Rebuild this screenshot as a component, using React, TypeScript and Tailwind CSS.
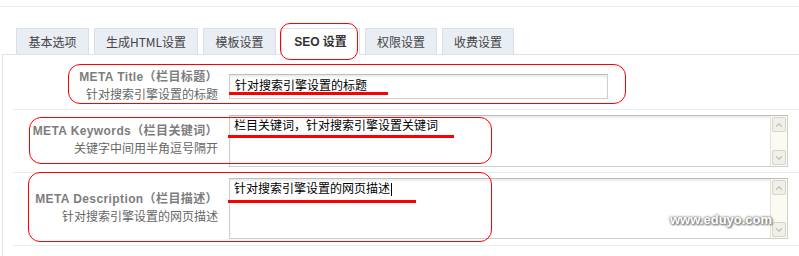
import { ChevronDown, ChevronUp } from 'lucide-react';

const tabs = ['基本选项', '生成HTML设置', '模板设置', 'SEO 设置', '权限设置', '收费设置'];
const tabWidths = ['w-[73px]', 'w-[104px]', 'w-[73px]', 'w-[79px]', 'w-[72px]', 'w-[72px]'];

const Label = ({ title, sub, top }: { title: string; sub: string; top: string }) => (
  <div className={`w-[205px] shrink-0 text-right leading-[16px] ${top}`}>
    <div className="text-[12px] font-bold tracking-[0.4px] text-[#7d7d7d] font-['Liberation_Sans','Noto_Sans_CJK_SC',sans-serif]">
      {title}
    </div>
    <div className="text-[12px] text-[#666] mt-px">{sub}</div>
  </div>
);

const ScrollBar = () => (
  <div className="w-[17px] shrink-0 flex flex-col bg-[#fbfbf2] border-l border-[#e4e3da] p-px">
    <div className="h-[15px] bg-[#f1f0e8] border border-[#d6d5cb] rounded-[2px] flex items-center justify-center">
      <ChevronUp className="w-[10px] h-[10px] text-[#c3c2b8]" strokeWidth={3} />
    </div>
    <div className="flex-1" />
    <div className="h-[15px] bg-[#f1f0e8] border border-[#d6d5cb] rounded-[2px] flex items-center justify-center">
      <ChevronDown className="w-[10px] h-[10px] text-[#c3c2b8]" strokeWidth={3} />
    </div>
  </div>
);

const TextArea = ({ text, height, caret }: { text: string; height: string; caret?: boolean }) => (
  <div className={`flex w-[559px] ${height} border border-[#cfcfcf] border-t-[#bdbdbd] shadow-[inset_0_2px_2px_rgba(0,0,0,0.08)] bg-white`}>
    <div className="flex-1 pl-[4px] pt-[2px] text-[12px] leading-[13px] text-black">
      {text}
      {caret && <span className="inline-block w-px h-[13px] bg-black align-middle ml-px" />}
    </div>
    <ScrollBar />
  </div>
);

export default function App() {
  return (
    <div className="relative w-[799px] h-[256px] bg-white overflow-hidden font-['Noto_Sans_CJK_SC',sans-serif]">
      <div className="pt-[6px]">
        <div className="h-px bg-[#e9ecf0]" />
      </div>

      {/* tabs */}
      <div className="flex items-end gap-[5px] pl-[16px] mt-[21px]">
        {tabs.map((t, i) => {
          const active = i === 3;
          return (
            <div
              key={t}
              className={`${tabWidths[i]} flex items-center justify-center border border-b-0 text-[12px] ${
                active
                  ? 'h-[27px] -mb-px relative z-10 bg-white border-[#dde3ea] text-[#333] font-bold font-["Liberation_Sans","Noto_Sans_CJK_SC",sans-serif]'
                  : 'h-[26px] bg-[#e9edf4] border-[#d9dfe8] text-[#444]'
              }`}
            >
              {t}
            </div>
          );
        })}
      </div>

      {/* content */}
      <div className="ml-[2px] border-l border-t border-[#dde3ea] h-[210px]">
        <div className="ml-[10px] h-[55px] flex items-start border-b border-[#e9ecef]">
          <Label title="META Title（栏目标题）" sub="针对搜索引擎设置的标题" top="mt-[14px]" />
          <div className="ml-[11px] mt-[19px] w-[379px] h-[25px] border border-[#cfcfcf] border-t-[#bdbdbd] shadow-[inset_0_2px_2px_rgba(0,0,0,0.08)] pl-[5px] pt-[3px] leading-[14px] text-[12px] text-black">
            针对搜索引擎设置的标题
          </div>
        </div>

        <div className="ml-[10px] h-[63px] flex items-start border-b border-[#e9ecef]">
          <Label title="META Keywords（栏目关键词）" sub="关键字中间用半角逗号隔开" top="mt-[13px]" />
          <div className="ml-[11px] mt-[5px]">
            <TextArea text="栏目关键词，针对搜索引擎设置关键词" height="h-[52px]" />
          </div>
        </div>

        <div className="ml-[10px] h-[73px] flex items-start border-b border-[#e9ecef]">
          <Label title="META Description（栏目描述）" sub="针对搜索引擎设置的网页描述" top="mt-[18px]" />
          <div className="ml-[11px] mt-[5px]">
            <TextArea text="针对搜索引擎设置的网页描述" height="h-[61px]" caret />
          </div>
        </div>
      </div>

      {/* red annotations */}
      <div className="absolute left-[280px] top-[23px] w-[78px] h-[37px] border border-[#ff0000] rounded-[10px] z-20" />
      <div className="absolute left-[68px] top-[64px] w-[558px] h-[40px] border border-[#ff0000] rounded-[12px]" />
      <div className="absolute left-[29px] top-[117px] w-[463px] h-[47px] border border-[#ff0000] rounded-[12px]" />
      <div className="absolute left-[28px] top-[172px] w-[464px] h-[70px] border border-[#ff0000] rounded-[12px]" />
      <div className="absolute left-[229px] top-[92px] w-[159px] h-[3px] bg-[#ff0000]" />
      <div className="absolute left-[228px] top-[135px] w-[226px] h-[3px] bg-[#ff0000]" />
      <div className="absolute left-[228px] top-[200px] w-[188px] h-[3px] bg-[#ff0000]" />

      {/* watermark */}
      <div className="absolute left-[670px] top-[212px] text-[13px] leading-[16px] font-bold text-white font-['Liberation_Sans',sans-serif] [text-shadow:0_0_2px_#777,0_0_3px_#888,1px_1px_2px_#666]">
        www.eduyo.com
      </div>
    </div>
  );
}
